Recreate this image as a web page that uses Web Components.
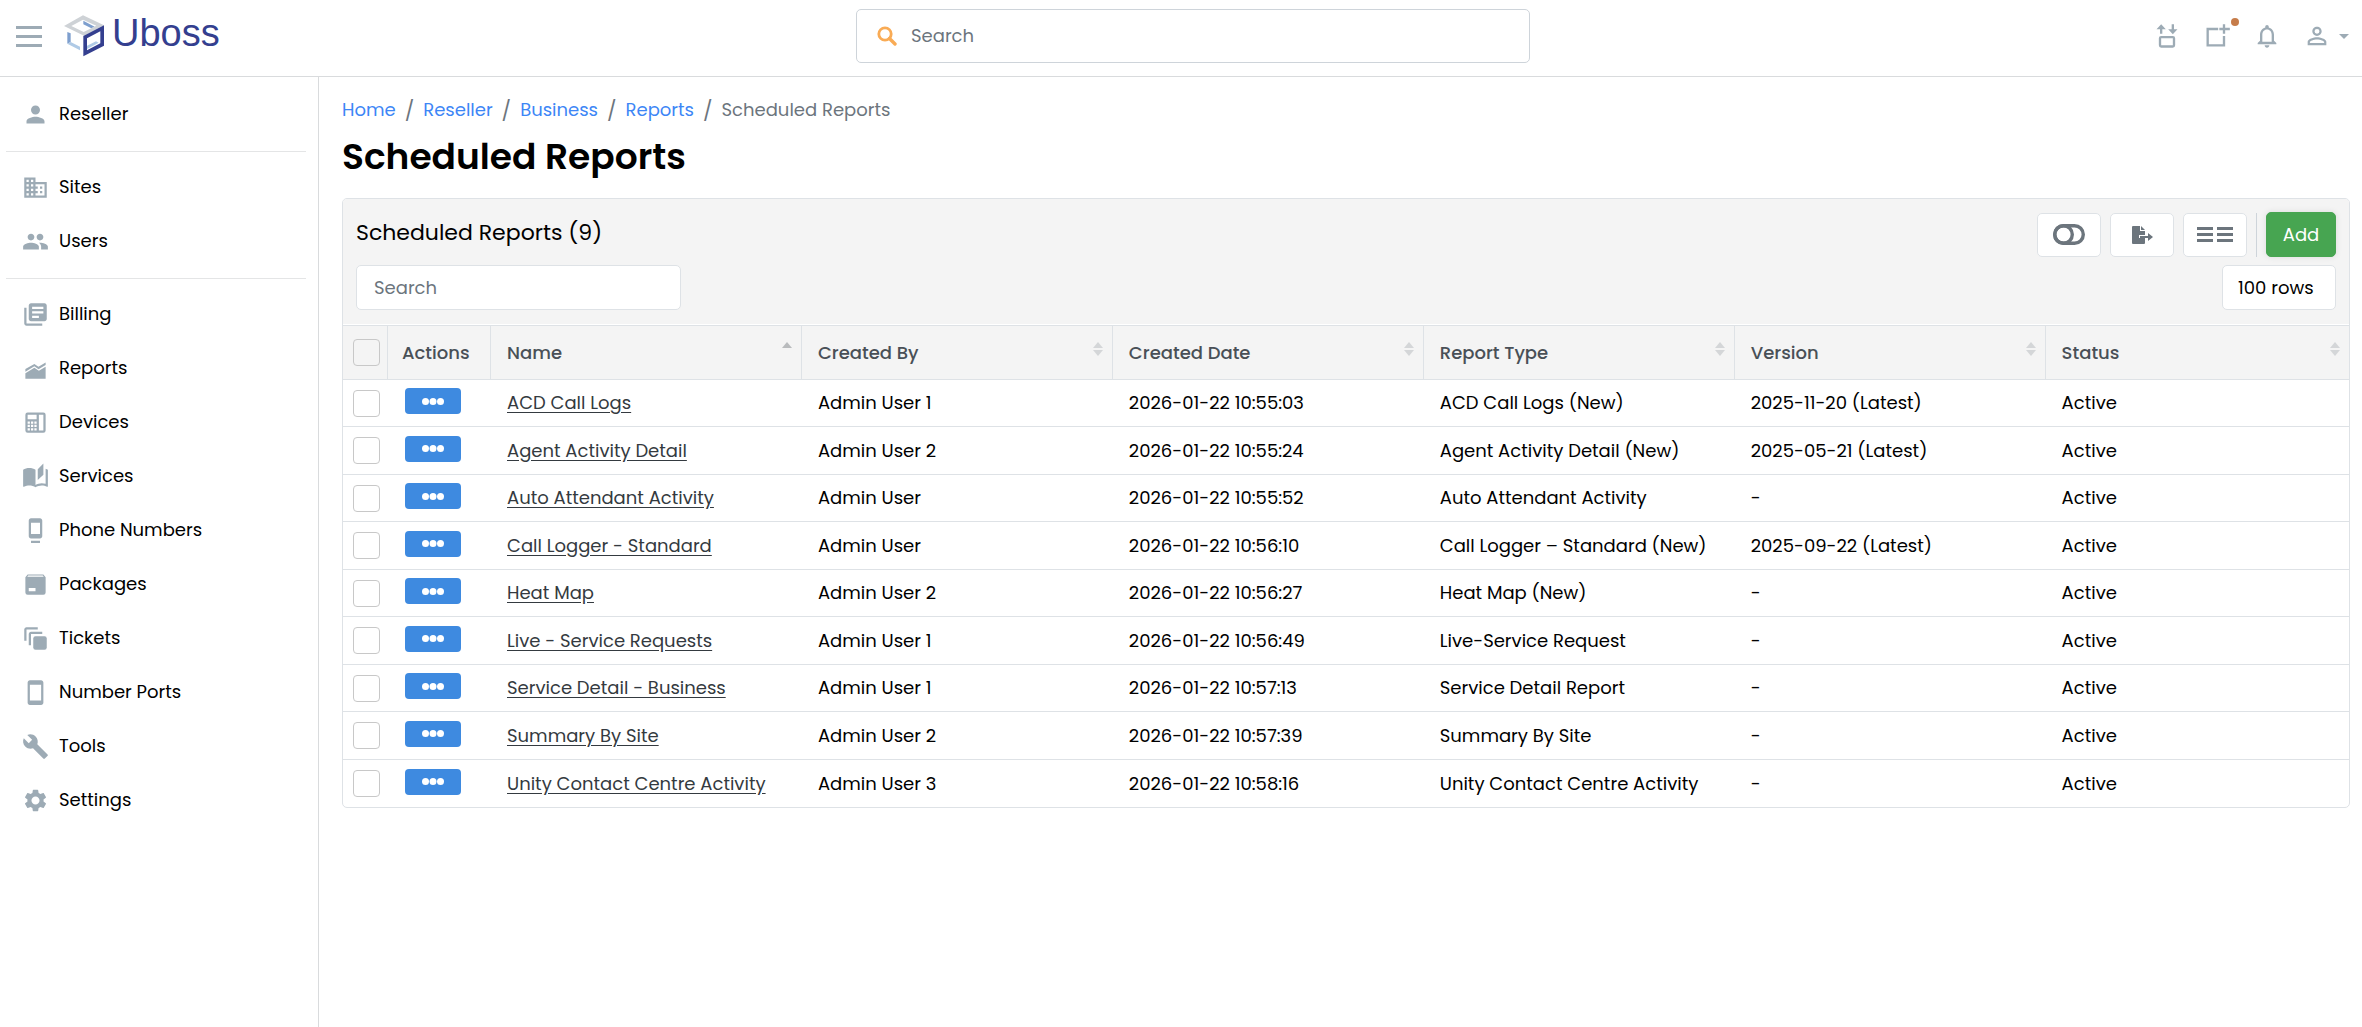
<!DOCTYPE html>
<html lang="en">
<head>
  <meta charset="utf-8">
  <meta name="viewport" content="width=device-width, initial-scale=1">
  <title>Scheduled Reports</title>
  <style>
    body {
      margin: 0;
      background: #fff;
      color: #000;
      font-family: Poppins, Inter, "Liberation Sans", sans-serif;
      font-size: 18px;
      line-height: 24px;
      --border: #dee2e6;
      --panel: #f4f4f4;
      --icon: #9dabb5;
      --muted: #6c757d;
    }
  </style>
</head>
<body>
  <app-shell>
    <app-header slot="header"></app-header>

    <side-nav slot="nav">
      <nav-item icon="person">Reseller</nav-item>
      <hr>
      <nav-item icon="building">Sites</nav-item>
      <nav-item icon="people">Users</nav-item>
      <hr>
      <nav-item icon="billing">Billing</nav-item>
      <nav-item icon="chart">Reports</nav-item>
      <nav-item icon="device">Devices</nav-item>
      <nav-item icon="book">Services</nav-item>
      <nav-item icon="phone">Phone Numbers</nav-item>
      <nav-item icon="package">Packages</nav-item>
      <nav-item icon="tickets">Tickets</nav-item>
      <nav-item icon="mobile">Number Ports</nav-item>
      <nav-item icon="wrench">Tools</nav-item>
      <nav-item icon="gear">Settings</nav-item>
    </side-nav>

    <bread-crumb>
      <a href="#home">Home</a>
      <a href="#reseller">Reseller</a>
      <a href="#business">Business</a>
      <a href="#reports">Reports</a>
      <span aria-current="page">Scheduled Reports</span>
    </bread-crumb>
    <page-title>Scheduled Reports</page-title>
    <data-panel>
      <span slot="title">Scheduled Reports (9)</span>
      <report-table></report-table>
    </data-panel>
  </app-shell>

  <script>
    'use strict';

    (function() {
      // icon name -> [viewBox, markup]
      const ICONS = {
        menu: ['0 0 26 21', '<path d="M0 0h26v3H0zM0 9h26v3H0zM0 18h26v3H0z"/>'],
        person: ['0 0 24 24', '<path d="M12 12c2.21 0 4-1.79 4-4s-1.79-4-4-4-4 1.79-4 4 1.79 4 4 4zm0 2c-2.67 0-8 1.34-8 4v2h16v-2c0-2.66-5.33-4-8-4z"/>'],
        building: ['0 0 24 24', '<path d="M12 7V3H2v18h20V7H12zM6 19H4v-2h2v2zm0-4H4v-2h2v2zm0-4H4V9h2v2zm0-4H4V5h2v2zm4 12H8v-2h2v2zm0-4H8v-2h2v2zm0-4H8V9h2v2zm0-4H8V5h2v2zm10 12h-8v-2h2v-2h-2v-2h2v-2h-2V9h8v10zm-2-8h-2v2h2v-2zm0 4h-2v2h2v-2z"/>'],
        people: ['0 0 24 24', '<path d="M16 11c1.66 0 2.99-1.34 2.99-3S17.66 5 16 5s-3 1.34-3 3 1.34 3 3 3zm-8 0c1.66 0 2.99-1.34 2.99-3S9.66 5 8 5 5 6.34 5 8s1.34 3 3 3zm0 2c-2.33 0-7 1.17-7 3.5V19h14v-2.5c0-2.33-4.67-3.5-7-3.5zm8 0c-.29 0-.62.02-.97.05 1.16.84 1.97 1.97 1.97 3.45V19h6v-2.5c0-2.33-4.67-3.5-7-3.5z"/>'],
        billing: ['0 0 24 24', '<path d="M4 6H2v14c0 1.1.9 2 2 2h14v-2H4V6zm16-4H8c-1.1 0-2 .9-2 2v12c0 1.1.9 2 2 2h12c1.1 0 2-.9 2-2V4c0-1.1-.9-2-2-2zm-1 9H9V9h10v2zm-4 4H9v-2h6v2zm4-8H9V5h10v2z"/>'],
        chart: ['0 0 24 24', '<path d="M3 16.3l8-5 4 2.8 6-3.6V21H3zM3 12.5l8-4.6 3.6 2.5L21 6.6v2.2l-6.3 3.9-3.7-2.7-8 4.8z"/>'],
        device: ['0 0 24 24', '<path fill-rule="evenodd" d="M5 3h14a2 2 0 0 1 2 2v14a2 2 0 0 1-2 2H5a2 2 0 0 1-2-2V5a2 2 0 0 1 2-2zM5 5v4h8V5zM15 5v14h4V5zM5 11v2h2v-2zM8 11v2h2v-2zM11 11v2h2v-2zM5 14v2h2v-2zM8 14v2h2v-2zM11 14v2h2v-2zM5 17v2h2v-2zM8 17v2h2v-2zM11 17v2h2v-2z"/>'],
        book: ['0 0 24 24', '<path d="M19 .5l-5 5V15l5-4.5V.5zM1 6v14.65c0 .25.25.5.5.5.1 0 .15-.05.25-.05C3.1 20.45 5.05 20 6.5 20c1.95 0 4.05.4 5.5 1.5V6c-1.45-1.1-3.55-1.5-5.5-1.5S2.45 4.9 1 6zm22 13.5V6c-.6-.45-1.25-.75-2-1v13.5c-1.1-.35-2.3-.5-3.5-.5-1.7 0-4.15.65-5.5 1.5v2c1.35-.85 3.8-1.5 5.5-1.5 1.65 0 3.35.3 4.75 1.05.1.05.15.05.25.05.25 0 .5-.25.5-.5v-1.1z"/>'],
        phone: ['0 0 24 24', '<path d="M8 23h8v-2H8v2zM16 1H8c-1.1 0-2 .9-2 2v14c0 1.1.9 2 2 2h8c1.1 0 2-.9 2-2V3c0-1.1-.9-2-2-2zm0 14H8V5h8v10z"/>'],
        package: ['0 0 24 24', '<path fill-rule="evenodd" d="M5 3h14l2 2.5V19a2 2 0 0 1-2 2H5a2 2 0 0 1-2-2V5.5zM5.5 4l-.8 1h14.6l-.8-1zM6 15v3h6v-3z"/>'],
        tickets: ['0 0 24 24', '<path d="M2 14V4c0-1.1.9-2 2-2h10v2H4v10zM6 18V8c0-1.1.9-2 2-2h10v2H8v10z"/><rect x="10" y="10" width="12" height="12" rx="2"/>'],
        mobile: ['0 0 24 24', '<path d="M17 1H7c-1.1 0-2 .9-2 2v18c0 1.1.9 2 2 2h10c1.1 0 2-.9 2-2V3c0-1.1-.9-2-2-2zm0 18H7V5h10v14z"/>'],
        wrench: ['0 0 24 24', '<path d="M22.7 19l-9.1-9.1c.9-2.3.4-5-1.5-6.9-2-2-5-2.4-7.4-1.3L9 6 6 9 1.6 4.7C.4 7.1.9 10.1 2.9 12.1c1.9 1.9 4.6 2.4 6.9 1.5l9.1 9.1c.4.4 1 .4 1.4 0l2.3-2.3c.5-.4.5-1.1.1-1.4z"/>'],
        gear: ['0 0 24 24', '<path d="M19.14 12.94c.04-.3.06-.61.06-.94 0-.32-.02-.64-.07-.94l2.03-1.58c.18-.14.23-.41.12-.61l-1.92-3.32c-.12-.22-.37-.29-.59-.22l-2.39.96c-.5-.38-1.03-.7-1.62-.94l-.36-2.54c-.04-.24-.24-.41-.48-.41h-3.84c-.24 0-.43.17-.47.41l-.36 2.54c-.59.24-1.13.57-1.62.94l-2.39-.96c-.22-.08-.47 0-.59.22L2.74 8.87c-.12.21-.08.47.12.61l2.03 1.58c-.05.3-.09.63-.09.94s.02.64.07.94l-2.03 1.58c-.18.14-.23.41-.12.61l1.92 3.32c.12.22.37.29.59.22l2.39-.96c.5.38 1.03.7 1.62.94l.36 2.54c.05.24.24.41.48.41h3.84c.24 0 .44-.17.47-.41l.36-2.54c.59-.24 1.13-.56 1.62-.94l2.39.96c.22.08.47 0 .59-.22l1.92-3.32c.12-.22.07-.47-.12-.61l-2.01-1.58zM12 15.6c-1.98 0-3.6-1.62-3.6-3.6s1.62-3.6 3.6-3.6 3.6 1.62 3.6 3.6-1.62 3.6-3.6 3.6z"/>'],
        search: ['0 0 20 20', '<circle cx="8" cy="8" r="6.2" fill="none" stroke="currentColor" stroke-width="2.8"/><path d="M12.5 12.5l5.5 5.5" stroke="currentColor" stroke-width="3.4" stroke-linecap="round"/>'],
        transfer: ['0 0 24 24', '<path d="M7 2l4 4.2H8V10H6V6.2H3zM17 10.5l-4-4.2h3V2h2v4.3h3z"/><rect x="6" y="13" width="12" height="8" rx="1" fill="none" stroke="currentColor" stroke-width="2"/>'],
        compose: ['0 0 24 24', '<path d="M13 5v2H5v12h12v-7h2v9H3V5zM17 2h2v3h4v2h-4v3h-2V7h-3V5h3z"/>'],
        bell: ['0 0 24 24', '<path d="M12 22c1.1 0 2-.9 2-2h-4c0 1.1.9 2 2 2zm6-6v-5c0-3.07-1.63-5.64-4.5-6.32V4c0-.83-.67-1.5-1.5-1.5s-1.5.67-1.5 1.5v.68C7.64 5.36 6 7.92 6 11v5l-2 2v1h16v-1l-2-2zm-2 1H8v-6c0-2.48 1.51-4.5 4-4.5s4 2.02 4 4.5v6z"/>'],
        user: ['0 0 24 24', '<path d="M12 5.9a2.1 2.1 0 1 1 0 4.2 2.1 2.1 0 0 1 0-4.2m0 9c2.97 0 6.1 1.46 6.1 2.1v1.1H5.9V17c0-.64 3.13-2.1 6.1-2.1M12 4C9.79 4 8 5.79 8 8s1.79 4 4 4 4-1.79 4-4-1.79-4-4-4zm0 9c-2.67 0-8 1.34-8 4v3h16v-3c0-2.66-5.33-4-8-4z"/>'],
        caret: ['0 0 10 5', '<path d="M0 0h10L5 5z"/>'],
        toggle: ['0 0 32 21', '<g fill="none" stroke="currentColor" stroke-width="3.4"><rect x="1.7" y="1.7" width="28.6" height="17.6" rx="8.8"/><circle cx="10.5" cy="10.5" r="8.8"/></g>'],
        export: ['0 0 21 18', '<path d="M0 1a1 1 0 0 1 1-1h7v5h5v4H7v3h6v5a1 1 0 0 1-1 1H1a1 1 0 0 1-1-1zM9 0l4 4H9zM8 10h8V7l5 4-5 4v-3H8z"/>'],
        columns: ['0 0 36 15', '<path d="M0 0h16v3H0zM20 0h16v3H20zM0 6h16v3H0zM20 6h16v3H20zM0 12h16v3H0zM20 12h16v3H20z"/>'],
        dots: ['0 0 22 7', '<circle cx="3.5" cy="3.5" r="3.5"/><circle cx="11" cy="3.5" r="3.5"/><circle cx="18.5" cy="3.5" r="3.5"/>'],
        cube: ['0 0 120 124', '<path fill="#7e9fce" d="M58 16l34 18-10 5-24-12zM10 50l10 4v26l-10 5z"/><path fill="#afcae6" d="M10 85l10-5 28 14v11zM68 92l28-14 8 4-36 20z"/><path fill="#ced2d6" fill-rule="evenodd" d="M0 32L57 0l63 30-60 31zM22 32l37 18 38-19-40-18z"/><path fill="#343f8f" fill-rule="evenodd" d="M58 62l62-32v61l-62 32zM69 69v36l40-21V48z"/>'],
      };

      class UiIcon extends HTMLElement {
        constructor() {
          super();
          this.attachShadow({ mode: 'open' });
        }

        connectedCallback() {
          const [viewBox, markup] = ICONS[this.getAttribute('name')];
          this.shadowRoot.innerHTML = `
            <style>
              :host { display: block; flex: none; width: 27px; height: 27px; }
              svg { display: block; width: 100%; height: 100%; fill: currentColor; }
            </style>
            <svg viewBox="${viewBox}" aria-hidden="true">${markup}</svg>
          `;
        }
      }

      class AppShell extends HTMLElement {
        constructor() {
          super();
          this.attachShadow({ mode: 'open' }).innerHTML = `
            <style>
              :host { display: flex; flex-direction: column; min-height: 100vh; }
              .body { display: flex; flex: 1; }
              main { flex: 1; min-width: 0; padding: 21px 12px 24px 23px; }
            </style>
            <slot name="header"></slot>
            <div class="body">
              <slot name="nav"></slot>
              <main><slot></slot></main>
            </div>
          `;
        }
      }

      class AppHeader extends HTMLElement {
        constructor() {
          super();
          this.attachShadow({ mode: 'open' }).innerHTML = `
            <style>
              :host { display: block; border-bottom: 1px solid #d9dbdd; }
              header {
                display: grid;
                grid-template-columns: 428fr 337fr 416fr;
                align-items: center;
                padding: 9px 0 13px;
              }
              button {
                display: flex;
                align-items: center;
                padding: 0;
                border: 0;
                background: none;
                color: var(--icon);
                cursor: pointer;
              }
              .brand { display: flex; align-items: center; gap: 22px; padding-left: 16px; }
              .brand ui-icon[name="menu"] { width: 26px; height: 21px; }
              .logo {
                display: flex;
                align-items: flex-start;
                gap: 8px;
                color: #343f8f;
                font: 38px/36px "Liberation Sans", Arial, sans-serif;
                text-decoration: none;
              }
              .logo ui-icon { width: 40px; height: 42px; }
              .search {
                display: flex;
                align-items: center;
                gap: 14px;
                box-sizing: border-box;
                height: 54px;
                padding: 0 20px;
                border: 1px solid #ced4da;
                border-radius: 5px;
              }
              .search ui-icon { width: 20px; height: 20px; color: #f9ab55; }
              input {
                flex: 1;
                min-width: 0;
                padding: 0;
                border: 0;
                outline: 0;
                background: none;
                color: #000;
                font: inherit;
              }
              input::placeholder { color: var(--muted); opacity: 1; }
              .actions { display: flex; justify-content: flex-end; gap: 22px; padding-right: 13px; }
              .actions ui-icon { width: 28px; height: 28px; }
              .actions ui-icon[name="caret"] { width: 10px; height: 5px; }
              .account { gap: 8px; }
              .compose { position: relative; }
              .compose::after {
                content: "";
                position: absolute;
                top: -4px;
                right: -8px;
                width: 8px;
                height: 8px;
                border-radius: 50%;
                background: #c67c4a;
              }
            </style>
            <header>
              <div class="brand">
                <button type="button" aria-label="Toggle menu"><ui-icon name="menu"></ui-icon></button>
                <a class="logo" href="#home"><ui-icon name="cube"></ui-icon><span>Uboss</span></a>
              </div>
              <label class="search">
                <ui-icon name="search"></ui-icon>
                <input type="search" placeholder="Search" aria-label="Search">
              </label>
              <div class="actions">
                <button type="button" aria-label="Transfers"><ui-icon name="transfer"></ui-icon></button>
                <button type="button" class="compose" aria-label="Add to workspace"><ui-icon name="compose"></ui-icon></button>
                <button type="button" aria-label="Notifications"><ui-icon name="bell"></ui-icon></button>
                <button type="button" class="account" aria-label="Account">
                  <ui-icon name="user"></ui-icon><ui-icon name="caret"></ui-icon>
                </button>
              </div>
            </header>
          `;
        }
      }

      class SideNav extends HTMLElement {
        constructor() {
          super();
          this.attachShadow({ mode: 'open' }).innerHTML = `
            <style>
              :host {
                display: block;
                flex: none;
                box-sizing: border-box;
                width: 319px;
                border-right: 1px solid #d9dbdd;
              }
              nav { padding: 10px 12px 10px 6px; }
              ::slotted(hr) {
                height: 1px;
                margin: 10px 0 8px;
                border: 0;
                background: #e4e5e6;
              }
            </style>
            <nav aria-label="Main"><slot></slot></nav>
          `;
        }
      }

      class NavItem extends HTMLElement {
        constructor() {
          super();
          this.attachShadow({ mode: 'open' });
        }

        connectedCallback() {
          this.shadowRoot.innerHTML = `
            <style>
              :host { display: block; }
              a {
                display: flex;
                align-items: center;
                gap: 10px;
                padding: 15px 16px;
                color: #000;
                text-decoration: none;
              }
              ui-icon { margin: -2px 0; color: var(--icon); }
            </style>
            <a href="#${this.getAttribute('icon')}">
              <ui-icon name="${this.getAttribute('icon')}"></ui-icon>
              <slot></slot>
            </a>
          `;
        }
      }

      class BreadCrumb extends HTMLElement {
        constructor() {
          super();
          this.attachShadow({ mode: 'open' }).innerHTML = `
            <style>
              :host { display: block; }
              nav { display: flex; height: 24px; }
              ::slotted(a) { color: #3d86f6; text-decoration: none; }
              ::slotted(span) { color: var(--muted); }
              ::slotted(:not(:first-child))::before {
                content: "/";
                display: inline-block;
                padding: 0 9px;
                color: var(--muted);
                font-size: 20px;
                line-height: 20px;
                vertical-align: middle;
              }
            </style>
            <nav aria-label="Breadcrumb"><slot></slot></nav>
          `;
        }
      }

      class PageTitle extends HTMLElement {
        constructor() {
          super();
          this.attachShadow({ mode: 'open' }).innerHTML = `
            <style>
              :host { display: block; }
              h1 { margin: 12px 0 18px; font-size: 36px; line-height: 46px; font-weight: 600; }
            </style>
            <h1><slot></slot></h1>
          `;
        }
      }

      // white outlined button of the panel's toolbar
      class ToolButton extends HTMLElement {
        constructor() {
          super();
          this.attachShadow({ mode: 'open' });
        }

        connectedCallback() {
          this.shadowRoot.innerHTML = `
            <style>
              :host { display: block; }
              button {
                display: flex;
                align-items: center;
                justify-content: center;
                width: 64px;
                height: 44px;
                padding: 0;
                border: 1px solid var(--border);
                border-radius: 5px;
                background: #fff;
                color: var(--muted);
                cursor: pointer;
              }
              ui-icon[name="toggle"] { width: 32px; height: 21px; }
              ui-icon[name="export"] { width: 21px; height: 18px; }
              ui-icon[name="columns"] { width: 36px; height: 15px; }
            </style>
            <button type="button" aria-label="${this.getAttribute('label')}">
              <ui-icon name="${this.getAttribute('icon')}"></ui-icon>
            </button>
          `;
        }
      }

      class DataPanel extends HTMLElement {
        constructor() {
          super();
          this.attachShadow({ mode: 'open' }).innerHTML = `
            <style>
              :host {
                display: block;
                overflow: hidden;
                border: 1px solid var(--border);
                border-radius: 5px;
              }
              .top {
                display: flex;
                flex-direction: column;
                gap: 8px;
                padding: 13px 13px 14px;
                border-bottom: 1px solid #fff;
                background: var(--panel);
              }
              .row { display: flex; align-items: center; justify-content: space-between; }
              h2 { margin: 0 0 4px; font-size: 22px; line-height: 28px; font-weight: 400; }
              .tools { display: flex; align-items: center; gap: 9px; }
              .divider { width: 1px; height: 44px; background: #ced4da; }
              .add, input, select {
                box-sizing: border-box;
                height: 45px;
                border: 1px solid var(--border);
                border-radius: 5px;
                background: #fff;
                color: #000;
                font: inherit;
              }
              .add {
                width: 70px;
                border-color: #47a551;
                background: #47a551;
                box-shadow: 0 0 6px #0000001a;
                color: #fff;
                cursor: pointer;
              }
              input { width: 325px; padding: 0 17px; }
              input::placeholder { color: var(--muted); opacity: 1; }
              select { width: 114px; padding: 0 15px; appearance: none; }
            </style>
            <section>
              <div class="top">
                <div class="row">
                  <h2><slot name="title"></slot></h2>
                  <div class="tools">
                    <tool-button icon="toggle" label="Toggle view"></tool-button>
                    <tool-button icon="export" label="Export"></tool-button>
                    <tool-button icon="columns" label="Columns"></tool-button>
                    <div class="divider"></div>
                    <button type="button" class="add">Add</button>
                  </div>
                </div>
                <div class="row">
                  <input type="search" placeholder="Search" aria-label="Search reports">
                  <select aria-label="Rows per page"><option>100 rows</option></select>
                </div>
              </div>
              <slot></slot>
            </section>
          `;
        }
      }

      const COLUMNS = ['Name', 'Created By', 'Created Date', 'Report Type', 'Version', 'Status'];

      const REPORTS = [
        ['ACD Call Logs', 'Admin User 1', '2026-01-22 10:55:03', 'ACD Call Logs (New)', '2025-11-20 (Latest)', 'Active'],
        ['Agent Activity Detail', 'Admin User 2', '2026-01-22 10:55:24', 'Agent Activity Detail (New)', '2025-05-21 (Latest)', 'Active'],
        ['Auto Attendant Activity', 'Admin User', '2026-01-22 10:55:52', 'Auto Attendant Activity', '-', 'Active'],
        ['Call Logger - Standard', 'Admin User', '2026-01-22 10:56:10', 'Call Logger – Standard (New)', '2025-09-22 (Latest)', 'Active'],
        ['Heat Map', 'Admin User 2', '2026-01-22 10:56:27', 'Heat Map (New)', '-', 'Active'],
        ['Live - Service Requests', 'Admin User 1', '2026-01-22 10:56:49', 'Live-Service Request', '-', 'Active'],
        ['Service Detail - Business', 'Admin User 1', '2026-01-22 10:57:13', 'Service Detail Report', '-', 'Active'],
        ['Summary By Site', 'Admin User 2', '2026-01-22 10:57:39', 'Summary By Site', '-', 'Active'],
        ['Unity Contact Centre Activity', 'Admin User 3', '2026-01-22 10:58:16', 'Unity Contact Centre Activity', '-', 'Active'],
      ];

      class ReportTable extends HTMLElement {
        constructor() {
          super();
          this.attachShadow({ mode: 'open' });
        }

        connectedCallback() {
          const head = COLUMNS.map((name, i) => `
            <th scope="col" ${i === 0 ? 'aria-sort="ascending"' : ''}>
              <div class="head"><span>${name}</span><span class="sort"></span></div>
            </th>`).join('');

          const rows = REPORTS.map(([name, ...cells]) => `
            <tr>
              <td class="pick"><input type="checkbox" aria-label="Select ${name}"></td>
              <td class="act"><button type="button" aria-label="Actions for ${name}"><ui-icon name="dots"></ui-icon></button></td>
              <td><a href="#report">${name}</a></td>
              ${cells.map((text) => `<td>${text}</td>`).join('')}
            </tr>`).join('');

          this.shadowRoot.innerHTML = `
            <style>
              :host { display: block; }
              table {
                width: 100%;
                border-collapse: separate;
                border-spacing: 0;
                table-layout: fixed;
              }
              th, td { box-sizing: border-box; padding: 0 9px 0 17px; text-align: left; }
              th {
                height: 55px;
                padding-left: 16px;
                border-top: 1px solid var(--border);
                border-bottom: 1px solid var(--border);
                background: var(--panel);
                color: #495057;
                font-weight: 500;
              }
              th + th { border-left: 1px solid var(--border); }
              td { height: 47px; border-bottom: 1px solid var(--border); }
              tbody tr:nth-child(even) td { height: 48px; }
              tbody tr:last-child td { border-bottom: 0; }
              col { width: 15.5%; }
              col.pick { width: 44px; }
              col.act { width: 103px; }
              col:last-child { width: auto; }
              td.pick, th.pick { padding: 0 0 0 10px; }
              td.act { padding: 0 0 0 18px; }
              th.act { padding: 0 0 0 14px; }
              .head { display: flex; justify-content: space-between; align-items: center; }
              .sort { display: grid; gap: 2px; padding-bottom: 8px; }
              .sort::before, .sort::after {
                content: "";
                border: 5px solid transparent;
                border-top-width: 0;
                border-bottom: 6px solid #d4d6d8;
              }
              .sort::after { border-width: 6px 5px 0; border-color: #d4d6d8 transparent transparent; }
              [aria-sort] .sort::before { border-bottom-color: #b9bbbd; }
              [aria-sort] .sort::after { visibility: hidden; }
              input {
                display: block;
                box-sizing: border-box;
                width: 27px;
                height: 27px;
                margin: 0;
                border: 1px solid #c8c8c8;
                border-radius: 4px;
                appearance: none;
              }
              td button {
                display: flex;
                align-items: center;
                justify-content: center;
                width: 56px;
                height: 26px;
                margin: 0 0 4px;
                padding: 0;
                border: 0;
                border-radius: 4px;
                background: #3e8ae0;
                color: #fff;
                cursor: pointer;
              }
              ui-icon { width: 22px; height: 7px; }
              a { color: #343a40; text-underline-offset: 3px; }
            </style>
            <table>
              <colgroup><col class="pick"><col class="act"><col><col><col><col><col><col></colgroup>
              <thead>
                <tr>
                  <th class="pick" scope="col"><input type="checkbox" aria-label="Select all reports"></th>
                  <th class="act" scope="col">Actions</th>
                  ${head}
                </tr>
              </thead>
              <tbody>${rows}</tbody>
            </table>
          `;
        }
      }

      customElements.define('ui-icon', UiIcon);
      customElements.define('app-shell', AppShell);
      customElements.define('app-header', AppHeader);
      customElements.define('side-nav', SideNav);
      customElements.define('nav-item', NavItem);
      customElements.define('bread-crumb', BreadCrumb);
      customElements.define('page-title', PageTitle);
      customElements.define('tool-button', ToolButton);
      customElements.define('data-panel', DataPanel);
      customElements.define('report-table', ReportTable);
    })();
  </script>
</body>
</html>
